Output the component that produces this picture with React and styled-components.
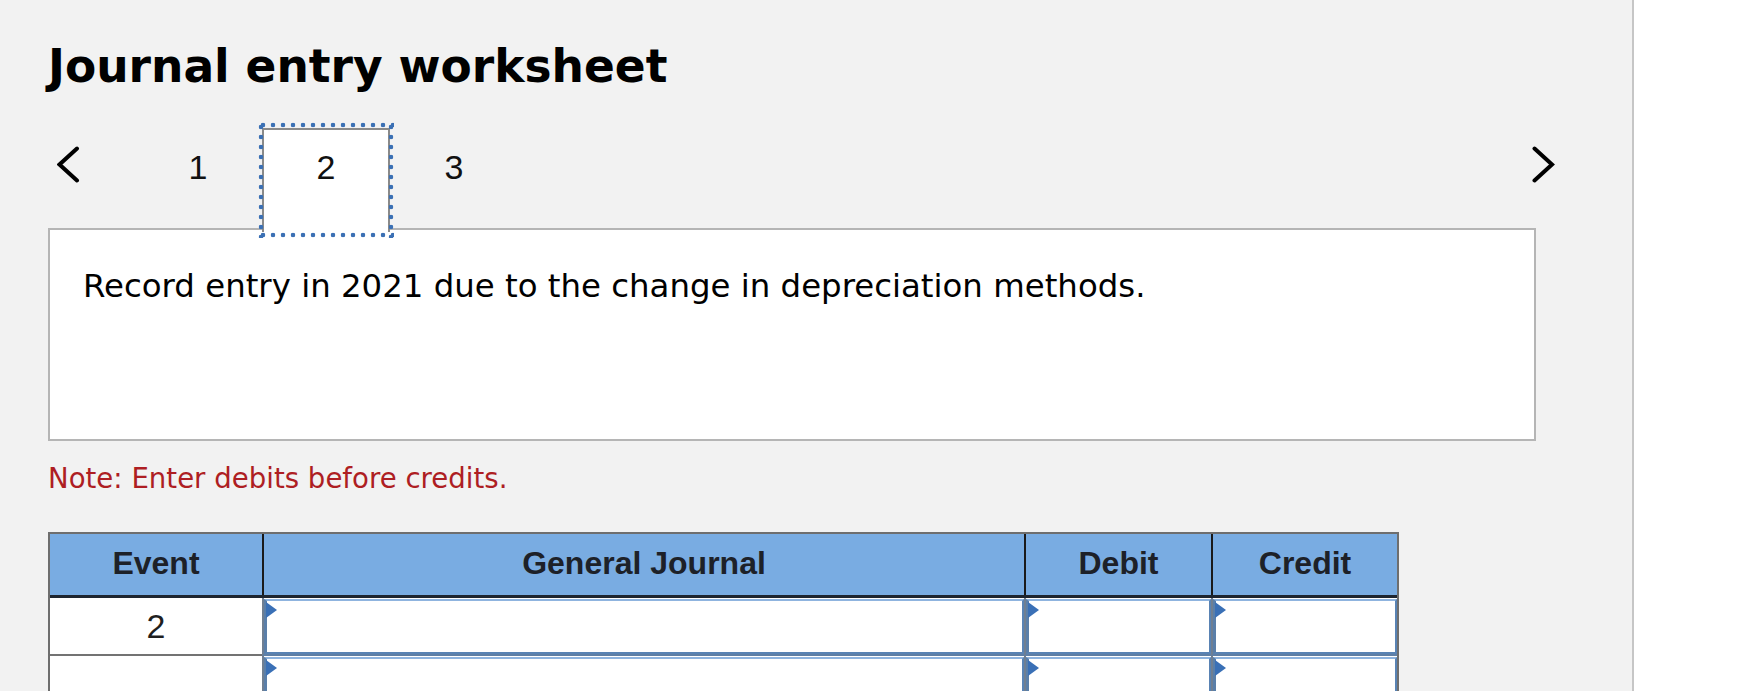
import React from "react";
import styled, { createGlobalStyle } from "styled-components";

const GlobalStyle = createGlobalStyle`
  html, body {
    margin: 0;
    padding: 0;
    background: #ffffff;
  }
  body {
    font-family: "DejaVu Sans", Verdana, sans-serif;
    color: #000;
  }
`;

const tabs = [1, 2, 3];
const activeTab = 2;

const columns = [
  { key: "event", label: "Event", width: 212 },
  { key: "journal", label: "General Journal", width: 762 },
  { key: "debit", label: "Debit", width: 187 },
  { key: "credit", label: "Credit", width: 186 },
];

const rows = [{ event: "2" }, { event: "" }];

const gridCols = columns.map((c) => `${c.width}px`).join(" ");

function Chevron({ dir }) {
  const points = dir === "left" ? "20,2.5 2.5,18.5 20,34.5" : "2.5,2.5 20,18.5 2.5,34.5";
  return (
    <svg width="23" height="37" viewBox="0 0 23 37">
      <polyline
        points={points}
        fill="none"
        stroke="#000"
        strokeWidth="4"
        strokeLinecap="round"
        strokeLinejoin="miter"
      />
    </svg>
  );
}

export default function App() {
  return (
    <>
      <GlobalStyle />
      <Page>
        <Title>Journal entry worksheet</Title>
        <Nav>
          <NavButton $side="left">
            <Chevron dir="left" />
          </NavButton>
          <Tabs>
            {tabs.map((t) => (
              <Tab key={t} $active={t === activeTab}>
                {t}
              </Tab>
            ))}
          </Tabs>
          <Spacer />
          <NavButton $side="right">
            <Chevron dir="right" />
          </NavButton>
        </Nav>
        <Panel>
          <p>Record entry in 2021 due to the change in depreciation methods.</p>
        </Panel>
        <Note>Note: Enter debits before credits.</Note>
        <Table>
          <HeaderRow>
            {columns.map((c) => (
              <HeaderCell key={c.key}>{c.label}</HeaderCell>
            ))}
          </HeaderRow>
          {rows.map((r, i) => (
            <BodyRow key={i}>
              <EventCell>{r.event}</EventCell>
              <InputCell>
                <Field />
              </InputCell>
              <InputCell>
                <Field />
              </InputCell>
              <InputCell>
                <Field />
              </InputCell>
            </BodyRow>
          ))}
        </Table>
      </Page>
    </>
  );
}

const Page = styled.div`
  box-sizing: border-box;
  width: 1634px;
  min-height: 100vh;
  background: #f2f2f2;
  border-right: 2px solid #c6c6c6;
  padding: 40px 0 0 48px;
`;

const Title = styled.h2`
  margin: 0;
  font-family: "DejaVu Sans", Verdana, sans-serif;
  font-weight: bold;
  font-size: 45.5px;
  line-height: normal;
  color: #000;
`;

const Nav = styled.div`
  display: flex;
  align-items: flex-start;
  width: 1512px;
  height: 100px;
  margin-top: 35px;
  position: relative;
  z-index: 1;
`;

const NavButton = styled.div`
  box-sizing: border-box;
  width: ${({ $side }) => ($side === "left" ? "86px" : "40px")};
  height: 100px;
  padding-top: 18px;
  padding-left: ${({ $side }) => ($side === "left" ? "9px" : "12px")};
  display: flex;
  align-items: flex-start;
  cursor: pointer;
`;

const Tabs = styled.div`
  display: flex;
`;

const dot = "radial-gradient(circle, #3b70b4 2px, transparent 2.6px)";

const Tab = styled.div`
  box-sizing: border-box;
  position: relative;
  width: 128px;
  height: ${({ $active }) => ($active ? "104px" : "100px")};
  padding-top: 18px;
  text-align: center;
  font-family: "Liberation Sans", Arial, sans-serif;
  font-size: 34px;
  line-height: normal;
  color: #111;
  background: ${({ $active }) => ($active ? "#ffffff" : "transparent")};
  border: 2px solid ${({ $active }) => ($active ? "#8a8a8a" : "transparent")};
  border-bottom: none;
  cursor: pointer;

  &::after {
    content: "";
    display: ${({ $active }) => ($active ? "block" : "none")};
    position: absolute;
    top: -8px;
    left: -6px;
    right: -6px;
    bottom: -6px;
    pointer-events: none;
    background:
      ${dot} 0 0 / 10px 6px repeat-x,
      ${dot} 0 100% / 10px 6px repeat-x,
      ${dot} 0 0 / 6px 10px repeat-y,
      ${dot} 100% 0 / 6px 10px repeat-y;
  }
`;

const Spacer = styled.div`
  flex: 1;
`;

const Panel = styled.div`
  box-sizing: border-box;
  width: 1488px;
  height: 213px;
  background: #ffffff;
  border: 2px solid #b5b5b5;
  padding: 37px 33px;

  p {
    margin: 0;
    font-family: "DejaVu Sans", Verdana, sans-serif;
    font-size: 32.4px;
    line-height: normal;
    color: #000;
  }
`;

const Note = styled.p`
  margin: 21px 0 0 0;
  font-family: "DejaVu Sans", Verdana, sans-serif;
  font-size: 27.6px;
  line-height: normal;
  color: #ae1e23;
`;

const Table = styled.div`
  box-sizing: border-box;
  width: 1351px;
  margin-top: 37px;
  border: 2px solid #6e6e6e;
  border-bottom: none;
`;

const HeaderRow = styled.div`
  display: grid;
  grid-template-columns: ${gridCols};
  height: 61px;
  background: #79ace2;
  border-bottom: 3px solid #1d2530;
`;

const HeaderCell = styled.div`
  display: flex;
  align-items: center;
  justify-content: center;
  font-family: "Liberation Sans", Arial, sans-serif;
  font-weight: bold;
  font-size: 32px;
  color: #1d2128;
  padding-bottom: 3px;

  & + & {
    border-left: 2px solid #1a1a1a;
  }
`;

const BodyRow = styled.div`
  display: grid;
  grid-template-columns: ${gridCols};
  height: 58px;
  background: #ffffff;
`;

const EventCell = styled.div`
  display: flex;
  align-items: center;
  justify-content: center;
  border-bottom: 2px solid #737373;
  font-family: "Liberation Sans", Arial, sans-serif;
  font-size: 34px;
  color: #1f1f1f;
`;

const InputCell = styled.div`
  box-sizing: border-box;
  display: flex;
  border-left: 2px solid #6f7f92;
  border-bottom: 2px solid #5f7fa5;
  padding: 1px 0 0 0;
`;

const Field = styled.div`
  position: relative;
  flex: 1;
  box-sizing: border-box;
  background: #ffffff;
  border: 2px solid #5983b4;
  border-top: 2px solid #8fb4df;
  border-left: 3px solid #5a7fa9;

  &::before {
    content: "";
    position: absolute;
    top: 1px;
    left: -1px;
    width: 0;
    height: 0;
    border-top: 8px solid transparent;
    border-bottom: 8px solid transparent;
    border-left: 11px solid #3a70b6;
  }
`;
